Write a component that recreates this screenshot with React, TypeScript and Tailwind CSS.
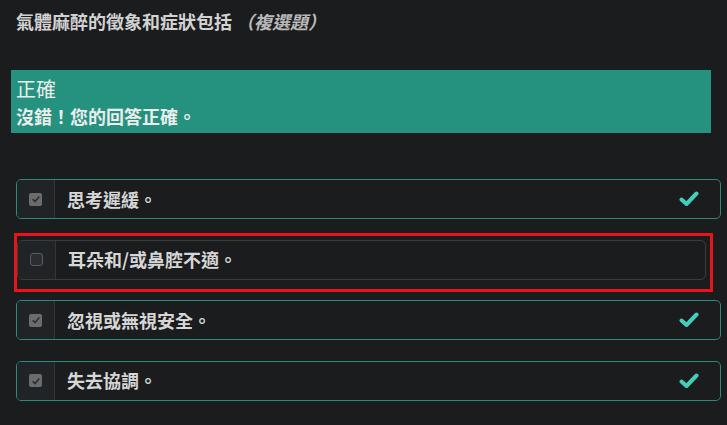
const font = "font-['Noto_Sans_CJK_TC','Noto_Sans',sans-serif]"

type Option = { text: string; checked: boolean; correct: boolean; wrong?: boolean }

const options: Option[] = [
  { text: "思考遲緩。", checked: true, correct: true },
  { text: "耳朵和/或鼻腔不適。", checked: false, correct: false, wrong: true },
  { text: "忽視或無視安全。", checked: true, correct: true },
  { text: "失去協調。", checked: true, correct: true },
]

function Box({ checked }: { checked: boolean }) {
  if (!checked) {
    return <div className="h-[13px] w-[13px] rounded-[3px] border border-[#5b5c5e] bg-[#2c2d30]" />
  }
  return (
    <div className="flex h-[13px] w-[13px] items-center justify-center rounded-[2px] bg-[#6c6c6c]">
      <svg viewBox="0 0 12 12" className="h-[10px] w-[10px]">
        <path d="M2 6.3 L4.8 9 L10 3" fill="none" stroke="#2f3032" strokeWidth="2" />
      </svg>
    </div>
  )
}

function Row({ o }: { o: Option }) {
  return (
    <div className={`relative ${o.wrong ? "ml-[17px] w-[689px]" : "ml-4 w-[705px]"}`}>
      <div
        className={`flex h-10 items-stretch overflow-hidden rounded-[5px] border ${
          o.correct ? "border-[#2a8a7b]" : "border-[#3a3b3e]"
        }`}
      >
        <div className="flex w-[38px] shrink-0 items-center justify-center border-r border-[#333538] bg-[#212427]">
          <Box checked={o.checked} />
        </div>
        <div className="flex flex-1 items-center pl-3 text-[18px] font-bold text-[#d6d6d6]">{o.text}</div>
        {o.correct && (
          <div className="flex items-center pr-[21px]">
            <svg viewBox="0 0 20 16" className="h-[16px] w-[20px]">
              <path d="M2.5 8.5 L7.5 13 L17.5 2.5" fill="none" stroke="#45cdb9" strokeWidth="4" strokeLinecap="round" strokeLinejoin="round" />
            </svg>
          </div>
        )}
      </div>
      {o.wrong && (
        <div className="pointer-events-none absolute -top-[7px] -left-[3px] -right-[7px] -bottom-[12px] border-[3px] border-[#e8141b]" />
      )}
    </div>
  )
}

export default function App() {
  return (
    <div className={`min-h-[425px] w-[727px] bg-[#1b1c1e] ${font}`}>
      <div className="pl-4 pt-[9px] text-[18px] font-bold leading-6 text-[#d2d2d2]">
        氣體麻醉的徵象和症狀包括
        <span className="ml-1 italic text-[#b9b9b9]">（複選題）</span>
      </div>

      <div className="ml-[11px] mt-[37px] h-[63px] w-[700px] bg-[#25927f] pl-[5px] pt-[6px] text-[#ececec]">
        <div className="text-[20px] leading-[26px]">正確</div>
        <div className="text-[18px] font-bold leading-[28px]">沒錯！您的回答正確。</div>
      </div>

      <div className="mt-[46px] flex flex-col gap-[20.5px]">
        {options.map((o) => (
          <Row key={o.text} o={o} />
        ))}
      </div>
    </div>
  )
}
